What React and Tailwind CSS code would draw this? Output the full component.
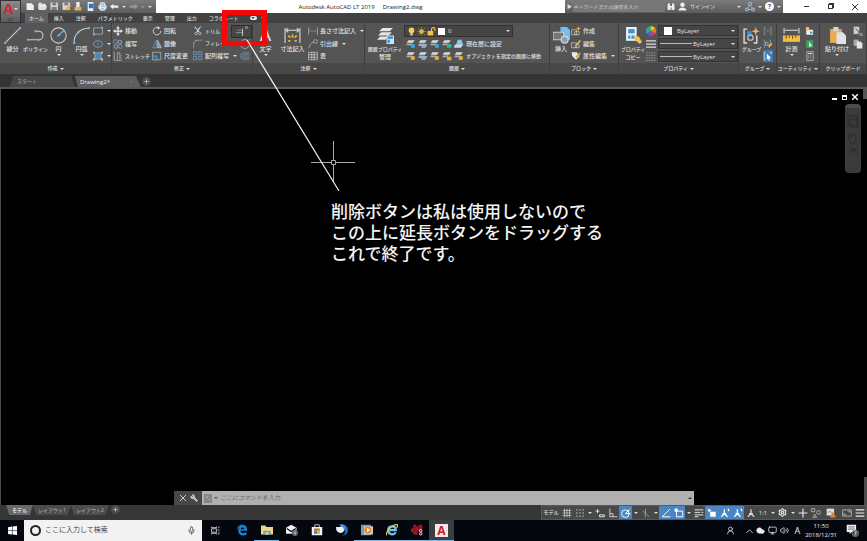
import { UserRound, Wrench, Settings, Cloud, Mic, Printer, FolderOpen, Monitor, Volume2 } from "lucide-react";

const jp = "font-['Open_Sans','Noto_Sans_CJK_JP',sans-serif]";

// Shared 16x16 drawings. Keys are used by the ribbon, quick access bar and status bar.
const shapes = {
    line: <><path d="M1 15 15 1" stroke="#ccc" /><path d="M0 14h2v2H0zM14 0h2v2h-2z" fill="#6cb4e8" stroke="none" /></>,
    pline: <><path d="M1 12h10a4 4 0 0 0 0-8H8" stroke="#ccc" /><path d="M0 11h2v2H0zM7 3h2v2H7zM10 11h2v2h-2z" fill="#6cb4e8" stroke="none" /></>,
    circle: <><circle cx="8" cy="8" r="7.2" stroke="#ccc" /><path d="m8 8 4-4" stroke="#6cb4e8" /><path d="M7 7h2v2H7zM12 3h2v2h-2z" fill="#6cb4e8" stroke="none" /></>,
    arc: <><path d="M1 15C1 7 6 2 15 1" stroke="#ccc" /><path d="M0 14h2v2H0zM4 4h2v2H4zM14 0h2v2h-2z" fill="#6cb4e8" stroke="none" /></>,
    rect: <><path d="M1 3h14v10H1z" stroke="#ccc" /><path d="M0 12h3v3H0zM13 1h3v3h-3z" fill="#6cb4e8" stroke="none" /></>,
    ellipse: <><ellipse cx="8" cy="8" rx="7" ry="5" stroke="#9ac4e4" /><path d="M7 7h2v2H7z" fill="#6cb4e8" stroke="none" /></>,
    hatch: <><path d="M3 3h10v10H3z" fill="#4f86b0" stroke="#9ac4e4" /><path d="M0 1h3v3H0zM13 1h3v3h-3zM0 12h3v3H0zM13 12h3v3h-3z" fill="#ccc" stroke="none" /></>,
    move: <path d="M8 0 5 4h2v3H4V5L0 8l4 3V9h3v3H5l3 4 3-4H9V9h3v2l4-3-4-3v2H9V4h2z" fill="#eee" stroke="none" />,
    copy: <><circle cx="4" cy="4" r="3" stroke="#6cb4e8" /><circle cx="11" cy="5" r="3" stroke="#ccc" /><circle cx="5" cy="12" r="3" stroke="#ccc" /><circle cx="12" cy="12" r="3" stroke="#6cb4e8" /></>,
    stretch: <><path d="M2 1v14M2 15h12M7 14V3h4v11" stroke="#ccc" /><path d="M13 6v9" stroke="#6cb4e8" strokeDasharray="2 1" /></>,
    rotate: <><path d="M11 3a6 6 0 1 0 3 5" stroke="#ddd" strokeWidth="1.4" /><path d="m9 0 4 3-4 3z" fill="#ddd" stroke="none" /></>,
    mirror: <><path d="M7 2v12H1z" stroke="#6cb4e8" /><path d="M9 2v12h6z" stroke="#ccc" fill="#999" /></>,
    scale: <><path d="M1 2h13v12H1z" stroke="#ccc" /><path d="M1 8h7v6H1z" stroke="#6cb4e8" fill="#3d6d92" /></>,
    trim: <><path d="m3 1 7 9M12 1 6 10" stroke="#eee" strokeWidth="1.6" /><circle cx="5" cy="12" r="2" stroke="#ddd" /><circle cx="11" cy="12" r="2" stroke="#ddd" /><path d="M1 3h4" stroke="#6cb4e8" /></>,
    fillet: <><path d="M1 15V9c0-5 3-7 7-7h7" stroke="#aaa" /><path d="M1 9c0-5 3-7 7-7" stroke="#6cb4e8" /></>,
    array: <><path d="M1 1h5v5H1zM9 1h5v5H9z" stroke="#6cb4e8" /><path d="M1 9h5v5H1zM9 9h5v5H9z" stroke="#6cb4e8" /></>,
    offset: <path d="M15 3H6a5 5 0 0 0 0 10h9M15 6H7a2 2 0 0 0 0 4h8" stroke="#7fb6dd" />,
    extend: <><path d="M1 9h10M4 5h6" stroke="#bbb" /><path d="M12 3v11" stroke="#ddd" strokeWidth="1.4" /></>,
    dim: <><path d="M1 1v14M15 1v14M2 3h12" stroke="#ddd" /><path d="m4 1-2 2 2 2M12 1l2 2-2 2" stroke="#ddd" /><path d="m8 7 0 3M4 8l2 2M12 8l-2 2M4 13h2M10 13h2" stroke="#f0b840" strokeWidth="1.6" /></>,
    linear: <><path d="M1 2v12M15 2v12" stroke="#ccc" /><path d="M2 8h12" stroke="#6cb4e8" /></>,
    leader: <><path d="M1 15C3 9 5 6 9 5" stroke="#ccc" /><circle cx="12" cy="4" r="3" stroke="#ccc" /></>,
    table: <><path d="M1 2h14v12H1z" stroke="#ddd" /><path d="M1 6h14M1 10h14M6 2v12M10 2v12" stroke="#ddd" /></>,
    layers: <><path d="M5 1h10l-3 3H2zM4 5h10l-3 3H1zM3 9h8l-3 3H0z" fill="#e4e4e4" stroke="none" /><path d="M9 8h7v8H9z" fill="#cfe6f7" stroke="none" /><path d="M10 9h5v2h-5zM10 12h2v3h-2z" fill="#3b87c4" stroke="none" /></>,
    layA: <><path d="M4 2h10l-3 4H1z" fill="#ddd" stroke="none" /><path d="M2 7h8l-2 3H0z" fill="#aaa" stroke="none" /><circle cx="11" cy="11" r="3.5" fill="#39a9dc" stroke="none" /></>,
    layB: <><path d="M4 2h10l-3 4H1z" fill="#ddd" stroke="none" /><path d="M2 7h8l-2 3H0z" fill="#aaa" stroke="none" /><circle cx="11" cy="11" r="3.5" fill="#e9ac34" stroke="none" /></>,
    layC: <><path d="M4 2h10l-3 4H1z" fill="#ddd" stroke="none" /><path d="M2 7h8l-2 3H0z" fill="#aaa" stroke="none" /><path d="M8 8h7v6H8z" fill="#2fb5a4" stroke="none" /></>,
    layD: <><path d="M4 2h10l-3 4H1z" fill="#ddd" stroke="none" /><path d="M2 7h8l-2 3H0z" fill="#aaa" stroke="none" /><path d="M8 9h7v6H8z" fill="#e9ac34" stroke="none" /><path d="M9 9V6h4" stroke="#e9ac34" /></>,
    layE: <><path d="M4 2h10l-3 4H1z" fill="#ddd" stroke="none" /><path d="M2 7h9l-3 4H0z" fill="#aaa" stroke="none" /><path d="M7 8h8l-3 6H5z" fill="#8cb4d2" stroke="none" /></>,
    layF: <><path d="M6 1h6l3 9H3z" fill="#8cc4ea" stroke="none" /><path d="M1 9h13l-3 5H0z" fill="#cfd9e0" stroke="none" /></>,
    bulb: <><circle cx="8" cy="6" r="5" fill="#f6cf5d" stroke="none" /><path d="M6 11h4v4H6z" fill="#ddd" stroke="none" /></>,
    sun: <><circle cx="8" cy="8" r="4" fill="#f3c244" stroke="none" /><path d="M8 0v16M0 8h16M2 2l12 12M14 2 2 14" stroke="#e0ac36" strokeWidth=".8" /></>,
    unlock: <><path d="M1 7h10v8H1z" fill="#f3c244" stroke="none" /><path d="M8 7V4a3 3 0 0 1 6 0v3" stroke="#f3c244" strokeWidth="2" /></>,
    insert: <><path d="M7 0h6l3 3v9H7z" fill="#78bdf0" stroke="none" /><path d="M0 5h10v7H0z" fill="#777" stroke="#ccc" /><circle cx="11" cy="12" r="3.3" fill="#8a9fb0" stroke="#ddd" /></>,
    create: <><path d="M1 6h8v8H1z" stroke="#ddd" /><path d="M6 9h7v5H6z" stroke="#ddd" /><path d="m12 0 1 3 3 1-3 1-1 3-1-3-3-1 3-1z" fill="#f3b83c" stroke="none" /></>,
    edit: <><path d="M1 6h8v8H1zM7 9h6v5H7z" stroke="#ddd" /><path d="m8 9 6-8 2 2-6 7z" fill="#f3b83c" stroke="none" /></>,
    attr: <><path d="M1 2h8l5 6-6 6-6-6z" fill="#eee" stroke="none" /><path d="m7 9 7-7 2 2-7 7z" fill="#d99a30" stroke="none" /></>,
    match: <><path d="M1 0h10v13H1z" fill="#e8f1f8" stroke="none" /><path d="M3 2h6v4H3z" fill="#3d91d4" stroke="none" /><path d="M3 8h2v3H3zM6 8h3v3H6z" fill="#3d91d4" stroke="none" /><path d="m8 8 5 1 3 5-2 2-5-4z" fill="#eabf62" stroke="none" /></>,
    wheel: <><path d="M8 8V0a8 8 0 0 1 7 4z" fill="#f2c431" stroke="none" /><path d="m8 8 7-4a8 8 0 0 1 0 8z" fill="#ee7a2b" stroke="none" /><path d="m8 8 7 4a8 8 0 0 1-7 4z" fill="#d9377d" stroke="none" /><path d="M8 8v8a8 8 0 0 1-7-4z" fill="#6a54c9" stroke="none" /><path d="m8 8-7 4a8 8 0 0 1 0-8z" fill="#2aa2e0" stroke="none" /><path d="M8 8 1 4a8 8 0 0 1 7-4z" fill="#46b34b" stroke="none" /></>,
    weights: <path d="M0 3h16M0 8h16M0 13h16" stroke="#ddd" strokeWidth="2" />,
    types: <path d="M0 3h16M0 7h16M0 11h16M0 15h16" stroke="#aaa" strokeDasharray="3 1" />,
    group: <><path d="M4 2H1v13h3M10 15h3V8" stroke="#ddd" strokeWidth="1.3" /><path d="M4 4h4v4H4z" fill="#3d91d4" stroke="none" /><circle cx="7" cy="10" r="2.5" stroke="#ccc" /><path d="m12 0 1 3 3 1-3 1-1 3-1-3-3-1 3-1z" fill="#f3b83c" stroke="none" /></>,
    ungroup: <><path d="M4 2H2v12h2M11 2h2v12h-2" stroke="#6cb4e8" /><path d="m4 5 8 6M12 5l-8 6" stroke="#e05a4a" /></>,
    gedit: <><path d="M4 2H2v12h2M10 2h2v5" stroke="#6cb4e8" /><path d="M4 5h4v5H4z" stroke="#ccc" /><path d="m8 11 5-5 2 2-5 6z" fill="#f3b83c" stroke="none" /></>,
    gsel: <><path d="M4 2H2v12h2M11 2h2v3" stroke="#fff" /><path d="m6 4 7 7-3 .5L11 15l-2 0-1-3-2 2z" fill="#fff" stroke="none" /></>,
    measure: <><path d="M1 1v5M15 1v5M2 3h12" stroke="#ddd" /><path d="M0 8h16v6H0z" fill="#f1be49" stroke="none" /><path d="M3 8v3M6 8v2M9 8v3M12 8v2" stroke="#7a5a16" /></>,
    quick: <><path d="M2 6h11v8H2z" fill="#eee" stroke="none" /><circle cx="4" cy="4" r="3" fill="#f1be49" stroke="none" /><path d="M8 9h4v3H8z" fill="#3d91d4" stroke="none" /></>,
    select: <><path d="M2 2h11v12H2z" fill="#3da264" stroke="none" /><path d="m6 4 6 7-3 0-2 3z" fill="#d7f5e1" stroke="none" /></>,
    calc: <><path d="M3 1h10v14H3z" stroke="#ddd" /><path d="M5 3h6v2H5z" fill="#ddd" stroke="none" /><path d="M5 8h6M5 11h6" stroke="#ddd" strokeDasharray="2 1" /></>,
    paste: <><path d="M1 2h11v13H1z" fill="#e8ad52" stroke="none" /><path d="M4 0h5v4H4z" fill="#d4d4d4" stroke="none" /><path d="M7 5h6l3 3v8H7z" fill="#dfe3e6" stroke="none" /></>,
    cut: <><path d="M1 1h9v12H1z" fill="#ccc" stroke="none" /><path d="m4 4 9 9M13 7l-7 7" stroke="#555" strokeWidth="1.5" /><circle cx="13" cy="14" r="2" stroke="#ddd" /></>,
    pages: <><path d="M1 1h8v10H1z" fill="#aaa" stroke="none" /><path d="M6 4h6l3 3v8H6z" fill="#e4e4e4" stroke="none" /></>,
    page: <path d="M1 2h9l4 4v8H1z" fill="#eee" stroke="none" />,
    save: <><path d="M1 1h13v13H1z" fill="#d8d8d8" stroke="none" /><path d="M4 1h7v5H4zM3 9h9v5H3z" fill="#7d7d7d" stroke="none" /></>,
    saveAs: <><path d="M1 1h13v13H1z" fill="#d8d8d8" stroke="none" /><path d="M4 1h7v5H4z" fill="#7d7d7d" stroke="none" /><path d="m6 12 8-7 2 2-7 8z" fill="#e9ac34" stroke="none" /></>,
    cloudOpen: <><path d="M4 0h6v9H4z" fill="#eee" stroke="none" /><path d="M1 9h12v6H1z" fill="#e0b45a" stroke="none" /></>,
    mobile: <><path d="M3 0h10v16H3z" fill="#e6eef5" stroke="none" /><path d="M5 3h8v8H5z" fill="#2e79bd" stroke="none" /></>,
    undo: <path d="M0 8 6 3v3h9v4H6v3z" fill="#eee" stroke="none" />,
    redo: <path d="m16 8-6-5v3H1v4h9v3z" fill="#999" stroke="none" />,
    grid: <path d="M4 1v14M8 1v14M12 1v14M1 4h14M1 8h14M1 12h14" stroke="#ddd" />,
    dots: <path d="M2 3h13M2 8h13M2 13h13" stroke="#ddd" strokeWidth="1.6" strokeDasharray="2 3" />,
    infer: <path d="M1 5h6M4 2v6M7 11h8v3H7z" stroke="#ddd" strokeWidth="1.6" />,
    ortho: <path d="M3 1v13h12M3 9h5v5" stroke="#ddd" strokeWidth="1.4" />,
    polar: <><circle cx="7" cy="9" r="6" stroke="#fff" strokeWidth="1.5" /><path d="M7 9h8M7 9l7-7" stroke="#fff" strokeWidth="1.5" /></>,
    iso: <path d="M7 1v14M7 8l6 6M7 8 3 5" stroke="#8fae84" strokeWidth="1.4" />,
    angle: <path d="M14 2 2 14h13" stroke="#fff" strokeWidth="1.5" />,
    osnap: <><path d="M4 5h10v9H4z" stroke="#fff" strokeWidth="1.5" /><path d="M1 1h5v5H1z" fill="#fff" stroke="none" /></>,
    lwt: <path d="M1 3h14M1 7h9M12 7h3M1 11h14M1 14h6" stroke="#ddd" strokeWidth="1.6" />,
    cycle: <><path d="M5 6h9v8H5z" fill="#fff" stroke="none" /><path d="m1 1 6 2-4 4z" fill="#fff" stroke="none" /></>,
    anno: <><path d="M7 2v7l-5 5M7 9l5 5M4 9h6" stroke="#fff" strokeWidth="2" /><path d="m13 1 1 4" stroke="#fff" strokeWidth="2" /></>,
    annoPlain: <path d="M8 2v7l-5 5M8 9l5 5M5 9h6" stroke="#ddd" strokeWidth="2" />,
    plus: <path d="M8 1v14M1 8h14" stroke="#eee" strokeWidth="1.8" />,
    isolate: <><path d="M1 1h5v5H1z" stroke="#ddd" /><circle cx="12" cy="7" r="3" stroke="#ddd" /><path d="m6 10 3 5H3z" stroke="#ddd" /></>,
    warn: <><path d="M1 1h12v11H1z" fill="#ddd" stroke="none" /><path d="m3 8 3-3 3 3" stroke="#555" /><path d="m11 6 5 9H6z" fill="#ed7c2d" stroke="none" /></>,
    clean: <><path d="M1 3h14v10H1z" stroke="#ddd" /><path d="M9 5h4v3M7 11H3V8" stroke="#ddd" /></>,
    menu: <path d="M1 3h14M1 8h14M1 13h14" stroke="#eee" strokeWidth="1.8" />,
};

function Icon({ name, className = "size-[10px]" }) {
    return (
        <svg viewBox="0 0 16 16" fill="none" className={`${className} shrink-0`} aria-hidden="true">
            {shapes[name]}
        </svg>
    );
}

function Caret({ className = "text-[#e0e0e0]" }) {
    return (
        <svg viewBox="0 0 4 2" className={`h-[2px] w-1 shrink-0 ${className}`} aria-hidden="true">
            <path d="M0 0h4L2 2z" fill="currentColor" />
        </svg>
    );
}

function Panel({ title, width, arrow = true, children }) {
    return (
        <section className={`flex flex-col border-r border-[#3f3f3f] ${width}`}>
            <div className="flex h-10 px-px pt-[2px] pb-px">{children}</div>
            <div className="flex h-[11px] items-center justify-center gap-[2px] bg-[#484848] text-[5px] whitespace-nowrap">
                {title}
                {arrow && <Caret />}
            </div>
        </section>
    );
}

function BigButton({ icon, label, label2, caret, width = "w-[23px]", children }) {
    return (
        <button className={`flex shrink-0 flex-col items-center whitespace-nowrap ${width}`}>
            <span className="flex h-5 items-center justify-center">
                {children || <Icon name={icon} className="size-[17px]" />}
            </span>
            <span className="h-2 leading-[8px]">{label}</span>
            {label2 && <span className="h-2 leading-[8px]">{label2}</span>}
            {caret && <Caret className="mt-px text-[#e0e0e0]" />}
        </button>
    );
}

function SmallButton({ icon, label, size = "text-[6px]", caret, active }) {
    return (
        <button
            aria-label={label || icon}
            className={`flex h-3 items-center gap-[2px] whitespace-nowrap ${size} ${active ? "bg-[#3e7cb5]" : ""}`}
        >
            <Icon name={icon} />
            {label}
            {caret && <Caret className="ml-[2px] text-[#e0e0e0]" />}
        </button>
    );
}

function Column({ width = "", children }) {
    return <div className={`flex shrink-0 flex-col items-start justify-between ${width}`}>{children}</div>;
}

function ByLayer({ label, children, pad = "pl-[18px]" }) {
    return (
        <label className="relative flex h-[11px] w-20 items-center border border-[#333] bg-[#454545]">
            {children}
            <select aria-label={label} className={`h-full w-full appearance-none text-[6px] leading-none ${pad}`}>
                <option>ByLayer</option>
            </select>
            <Caret className="absolute right-[2px] text-[#e0e0e0]" />
        </label>
    );
}

const quickAccess = ["page", "open", "save", "saveAs", "cloudOpen", "mobile", "print"];

function TitleBar() {
    return (
        <header className="flex h-[13px] bg-white">
            <div className="flex w-[135px] shrink-0 items-center gap-[3px] bg-gradient-to-b from-[#7b7b7b] to-[#5c5c5c] pl-[5px]">
                {quickAccess.map((name) => (
                    <button key={name} aria-label={name} className="w-[9px] shrink-0 text-white">
                        {name === "open" && <FolderOpen size={9} fill="#ddd" />}
                        {name === "print" && <Printer size={9} fill="#9cc8ea" />}
                        {shapes[name] && <Icon name={name} className="size-[9px]" />}
                    </button>
                ))}
                <button aria-label="undo"><Icon name="undo" className="size-[9px]" /></button>
                <Caret />
                <button aria-label="redo"><Icon name="redo" className="size-[9px]" /></button>
                <Caret className="text-[#999]" />
                <Caret />
            </div>
            <h1 className="flex flex-1 items-center justify-center gap-2 text-[6px] leading-none text-[#222]">
                <span>Autodesk AutoCAD LT 2019</span>
                <span>Drawing2.dwg</span>
            </h1>
            <div className="flex w-[218px] shrink-0 items-center bg-gradient-to-b from-[#7b7b7b] to-[#5c5c5c] text-[5px] text-[#e4e4e4]">
                <span className="w-2 pl-[2px] text-[5px]">▶</span>
                <input
                    aria-label="キーワードまたは語句を入力"
                    placeholder="キーワードまたは語句を入力"
                    className="h-[11px] w-[92px] bg-[#777] text-[5px] italic placeholder:text-[#ccc]"
                />
                <button aria-label="search" className="ml-[2px] w-[11px]">
                    <svg viewBox="0 0 16 16" className="size-[8px]"><path d="M2 1h4v4l1 3v6H1V6zM10 1h4l1 5v8H9V8l1-3zM6 6h4v3H6z" fill="#eee" /></svg>
                </button>
                <button className="flex flex-1 items-center gap-[3px]">
                    <svg viewBox="0 0 16 16" className="size-[9px]"><circle cx="8" cy="5" r="4" fill="#eee" /><path d="M1 15c0-7 14-7 14 0z" fill="#eee" /></svg>
                    サインイン
                </button>
                <Caret />
                <button aria-label="A360" className="ml-1">
                    <svg viewBox="0 0 16 16" className="size-[10px]" fill="none"><path d="M8 4 3 12h10z" stroke="#ccd8e8" /><path d="M6 1h4v4H6zM1 10h4v4H1zM11 10h4v4h-4z" fill="#3b6bb0" stroke="#dde" /></svg>
                </button>
                <Caret className="ml-[3px]" />
                <button aria-label="ヘルプ" className="mx-[3px] size-[9px] shrink-0 rounded-full bg-white text-[7px] leading-[9px] font-bold text-[#2f5f9b]">?</button>
                <Caret className="mr-[2px]" />
            </div>
            <div className="flex w-[84px] shrink-0 items-center justify-around pl-3 text-[#333]">
                <button aria-label="最小化" className="h-px w-[5px] bg-[#333]" />
                <button aria-label="元に戻す" className="relative size-[5px] border border-[#333]">
                    <span className="absolute -top-[2px] left-0 size-[5px] border-t border-r border-[#333]" />
                </button>
                <button aria-label="閉じる">
                    <svg viewBox="0 0 6 6" className="size-[6px]"><path d="m0 0 6 6M6 0 0 6" stroke="#222" strokeWidth=".9" /></svg>
                </button>
            </div>
        </header>
    );
}

const ribbonTabs = ["挿入", "注釈", "パラメトリック", "表示", "管理", "出力", "コラボレート"];

function RibbonTabs() {
    return (
        <nav className="flex h-[10px] items-center gap-[10px] bg-[#424242] pl-1 text-[5px] leading-none font-medium">
            <a href="#home" className="-mr-1 flex h-full items-center bg-[#606060] px-1">ホーム</a>
            {ribbonTabs.map((tab) => (
                <a key={tab} href={`#${tab}`} className="min-w-3">{tab}</a>
            ))}
            <span className="flex items-center gap-1 pl-px">
                <span className="flex h-1 w-[7px] items-center justify-center rounded-sm bg-[#eee]"><Caret className="text-[#444]" /></span>
                <Caret />
            </span>
        </nav>
    );
}

const layerRows = [
    { icons: ["layA", "layE", "layA", "layC"], last: "layF", label: "現在層に設定", size: "text-[6px]" },
    { icons: ["layB", "layE", "layB", "layD"], last: "layB", label: "オブジェクトを指定の画層に移動", size: "text-[5px]" },
];

function Ribbon() {
    return (
        <div className="flex bg-[#545454] text-[6px] leading-none font-medium text-[#e2e2e2]">
            <Panel title="作成" width="w-[112px]">
                <BigButton icon="line" label="線分" />
                <BigButton icon="pline" label={<span className="text-[5px]">ポリライン</span>} />
                <BigButton icon="circle" label="円" caret />
                <BigButton icon="arc" label="円弧" caret />
                <Column>
                    <SmallButton icon="rect" caret />
                    <SmallButton icon="ellipse" caret />
                    <SmallButton icon="hatch" caret />
                </Column>
            </Panel>
            <Panel title="修正" width="w-[141px]">
                <Column width="w-[39px]">
                    <SmallButton icon="move" label="移動" />
                    <SmallButton icon="copy" label="複写" />
                    <SmallButton icon="stretch" label="ストレッチ" size="text-[5px]" />
                </Column>
                <Column width="w-[41px]">
                    <SmallButton icon="rotate" label="回転" />
                    <SmallButton icon="mirror" label="鏡像" />
                    <SmallButton icon="scale" label="尺度変更" />
                </Column>
                <Column width="w-[47px]">
                    <SmallButton icon="trim" label="トリム" size="text-[5px]" />
                    <SmallButton icon="fillet" label="フィレット" size="text-[5px]" />
                    <SmallButton icon="array" label="配列複写" caret />
                </Column>
                <Column>
                    <SmallButton icon="extend" />
                    <SmallButton icon="circle" />
                    <SmallButton icon="offset" />
                </Column>
            </Panel>
            <Panel title="注釈" width="w-[112px]">
                <BigButton label="文字" caret>
                    <span className="font-['Liberation_Sans',sans-serif] text-[17px] leading-[17px] text-[#eee]">A</span>
                </BigButton>
                <BigButton icon="dim" label="寸法記入" width="w-[31px]" />
                <Column>
                    <SmallButton icon="linear" label="長さ寸法記入" caret />
                    <SmallButton icon="leader" label="引出線" caret />
                    <SmallButton icon="table" label="表" />
                </Column>
            </Panel>
            <Panel title="画層" width="w-[185px]">
                <BigButton icon="layers" width="w-[38px]" label={<span className="text-[5px]">画層プロパティ</span>} label2="管理" />
                <Column>
                    <label className="relative flex h-3 w-[109px] items-center gap-px border border-[#333] bg-[#454545] px-[2px]">
                        <Icon name="bulb" className="size-[9px]" />
                        <Icon name="sun" className="size-[9px]" />
                        <Icon name="unlock" className="size-[9px]" />
                        <span className="ml-px size-[7px] shrink-0 bg-white" />
                        <select aria-label="画層" className="w-full appearance-none pl-[2px] text-[6px] leading-none">
                            <option>0</option>
                        </select>
                        <Caret className="absolute right-[2px] text-[#e0e0e0]" />
                    </label>
                    {layerRows.map((row) => (
                        <div key={row.label} className="flex h-3 items-center gap-[2px] pl-[2px]">
                            {row.icons.map((name, idx) => (
                                <button key={idx} aria-label={`画層 ${idx + 1}`}><Icon name={name} /></button>
                            ))}
                            <SmallButton icon={row.last} label={row.label} size={row.size} />
                        </div>
                    ))}
                </Column>
            </Panel>
            <Panel title="ブロック" width="w-[69px]">
                <BigButton icon="insert" label="挿入" width="w-5" />
                <Column>
                    <SmallButton icon="create" label="作成" />
                    <SmallButton icon="edit" label="編集" />
                    <SmallButton icon="attr" label="属性編集" caret />
                </Column>
            </Panel>
            <Panel title="プロパティ" width="w-[120px]">
                <BigButton icon="match" width="w-[26px]" label={<span className="text-[5px]">プロパティ</span>} label2={<span className="text-[5px]">コピー</span>} />
                <Column width="w-3">
                    <SmallButton icon="wheel" />
                    <SmallButton icon="weights" />
                    <SmallButton icon="types" />
                </Column>
                <Column>
                    <ByLayer label="色"><span className="absolute left-[5px] size-2 bg-white" /></ByLayer>
                    <ByLayer label="線の太さ" pad="pl-[34px]"><span className="absolute left-px h-px w-8 bg-[#bbb]" /></ByLayer>
                    <ByLayer label="線種" pad="pl-[34px]"><span className="absolute left-px h-px w-8 bg-[#bbb]" /></ByLayer>
                </Column>
            </Panel>
            <Panel title="グループ" width="w-[38px]">
                <BigButton icon="group" label={<span className="text-[5px]">グループ</span>} />
                <Column>
                    <SmallButton icon="ungroup" />
                    <SmallButton icon="gedit" />
                    <SmallButton icon="gsel" active />
                </Column>
            </Panel>
            <Panel title="ユーティリティ" width="w-[43px]">
                <BigButton icon="measure" label="計測" width="w-[27px]" caret />
                <Column>
                    <SmallButton icon="quick" />
                    <SmallButton icon="select" />
                    <SmallButton icon="calc" />
                </Column>
            </Panel>
            <Panel title="クリップボード" width="min-w-0 flex-1" arrow={false}>
                <BigButton icon="paste" label="貼り付け" width="w-8" caret />
                <div className="flex flex-col gap-px">
                    <SmallButton icon="cut" />
                    <SmallButton icon="pages" />
                </div>
            </Panel>
        </div>
    );
}

function FileTabs() {
    return (
        <div className="flex h-[15px] items-end border-b-2 border-[#5a5a5a] bg-[#343434] pl-[10px] text-[6px] leading-none text-[#a8a8a8]">
            <button className="flex h-[11px] w-[65px] items-center bg-[#484848] pl-[7px] text-[5px] [clip-path:polygon(5%_0,94%_0,100%_100%,0_100%)]">スタート</button>
            <button className="flex h-[11px] w-[66px] items-center justify-between bg-[#5e5e5e] pr-2 pl-[5px] text-[#f0f0f0] [clip-path:polygon(0_0,92%_0,100%_100%,4%_100%)]">
                Drawing2*<span className="text-[6px] text-[#888]">×</span>
            </button>
            <button aria-label="新規図面" className="mb-px ml-px flex size-[9px] items-center justify-center rounded-full bg-[#4d4d4d]">
                <Icon name="plus" className="size-[5px]" />
            </button>
        </div>
    );
}

function DrawingArea() {
    return (
        <main className="relative flex min-h-0 flex-1 flex-col border-l border-[#4a4a4a] bg-black">
            <div className="flex items-start justify-end">
                <div className="mt-[5px] mr-[5px] flex items-center gap-[5px]">
                    <button aria-label="最小化" className="mt-1 h-[2px] w-[5px] bg-white" />
                    <button aria-label="元に戻す" className="size-[5px] border border-t-2 border-white" />
                    <button aria-label="閉じる">
                        <svg viewBox="0 0 6 6" className="size-[6px]"><path d="m0 0 6 6M6 0 0 6" stroke="#fff" strokeWidth="1.4" /></svg>
                    </button>
                </div>
                <div className="h-[10px] w-1 bg-[#555]" />
            </div>
            {/* ナビゲーションバー */}
            <div className="mt-1 mr-[6px] flex h-[69px] w-4 flex-col items-center self-end rounded-sm border-t-4 border-[#4c4c4c] bg-[#3b3b3b] pt-[5px]">
                <svg viewBox="0 0 16 50" className="h-[52px] w-4" fill="none" stroke="#2b2b2b">
                    <path d="M3 2h9v9H3zM5 5h8v8H5z" />
                    <path d="M4 26v-5l2-2 1 4 2-4 2 2v6l-2 3H6zM4 32l9 8M13 32l-9 8M4 36h9" />
                    <path d="M8 46v2" />
                </svg>
            </div>
            <p className="absolute top-[112px] left-[330px] text-[17px] leading-[21px] font-medium whitespace-nowrap text-[#f4f4f4]">
                削除ボタンは私は使用しないので
                <br />
                この上に延長ボタンをドラッグする
                <br />
                これで終了です。
            </p>
            <svg viewBox="0 0 44 44" className="absolute top-[51px] left-[310px] size-11" fill="none" stroke="#aaa">
                <path d="M0 22.5h20M24 22.5h20M22.5 1v19M22.5 24v18" />
                <path d="M20.5 20.5h4v4h-4z" />
            </svg>
            <div className="mx-[173px] mt-auto flex h-[14px] items-stretch text-[6px]">
                <div className="flex w-7 items-center justify-end gap-1 bg-[#484848] pr-1">
                    <svg viewBox="0 0 6 6" className="size-[6px]"><path d="m0 0 6 6M6 0 0 6" stroke="#ccc" /></svg>
                    <Wrench size={8} color="#ccc" fill="#ccc" className="-scale-x-100" />
                </div>
                <label className="flex flex-1 items-center gap-[2px] bg-[#b0b0b0] px-[2px]">
                    <span className="flex h-[9px] w-2 items-center justify-center bg-[#888] text-[5px] text-[#ddd]">&gt;_</span>
                    <Caret className="text-[#555]" />
                    <input
                        aria-label="コマンド"
                        placeholder="ここにコマンドを入力"
                        className="min-w-0 flex-1 text-[6px] italic placeholder:text-[#666]"
                    />
                    <Caret className="rotate-180 text-[#333]" />
                </label>
            </div>
            <div className="absolute right-0 bottom-0 h-7 w-[3px] bg-[#4c4c4c]" />
        </main>
    );
}

const statusItems = [
    { icon: "grid" }, { icon: "dots", caret: true },
    { icon: "infer" }, { icon: "ortho" }, { icon: "polar", on: true, caret: true },
    { icon: "iso", caret: true }, { icon: "angle", on: true }, { icon: "osnap", on: true, caret: true },
    { icon: "lwt" }, { icon: "cycle", on: true }, { icon: "anno", on: true }, { icon: "anno", on: true },
    { icon: "annoPlain" },
];

function StatusCell({ icon, on, caret }) {
    return (
        <>
            <button aria-label={icon} className={`flex h-[13px] w-[13px] items-center justify-center ${on ? "bg-[#4b86c2]" : ""}`}>
                <Icon name={icon} className="size-[10px]" />
            </button>
            {caret && <span className="flex w-[7px] justify-center"><Caret /></span>}
        </>
    );
}

function StatusBar() {
    return (
        <div className="flex h-[15px] justify-between bg-[#363636] text-[5px] leading-none text-[#bbb]">
            <div className="flex items-start pl-[6px]">
                <button className="h-[10px] w-[27px] bg-[#686868] font-medium text-white [clip-path:polygon(0_0,100%_0,88%_100%,12%_100%)]">モデル</button>
                <button className="h-[10px] w-[38px] bg-[#4c4c4c] [clip-path:polygon(0_0,100%_0,90%_100%,8%_100%)]">レイアウト1</button>
                <button className="h-[10px] w-[38px] bg-[#4c4c4c] [clip-path:polygon(0_0,100%_0,90%_100%,8%_100%)]">レイアウト2</button>
                <button aria-label="新規レイアウト" className="ml-[2px] flex size-[9px] items-center justify-center rounded-full bg-[#4c4c4c]">
                    <Icon name="plus" className="size-[5px]" />
                </button>
            </div>
            <div className="flex items-center border border-[#5a5a5a] bg-[#484848] text-[#e4e4e4]">
                <button className="w-[18px] text-[5px] font-medium">モデル</button>
                {statusItems.map((item, idx) => <StatusCell key={idx} {...item} />)}
                <button className="w-3 text-[6px]">1:1</button>
                <span className="flex w-[7px] justify-center"><Caret /></span>
                <button aria-label="ワークスペース" className="flex w-[13px] justify-center"><Settings size={9} strokeWidth={3} /></button>
                <span className="flex w-[7px] justify-center"><Caret /></span>
                <StatusCell icon="plus" />
                <StatusCell icon="isolate" />
                <span className="w-[2px]" />
                <StatusCell icon="warn" />
                <span className="w-[3px]" />
                <StatusCell icon="clean" />
                <StatusCell icon="menu" />
            </div>
        </div>
    );
}

const apps = [
    { name: "Edge", art: <><path d="M1 8C2 3 5 1 8 1c5 0 7 3 7 8H6c0 3 4 4 8 2v3c-5 3-11 1-11-5 0-2 1-4 3-5-2 1-4 2-5 4z" fill="#1683d8" /><path d="M6 7h5c0-3-4-3-5 0z" fill="#05070d" /></> },
    { name: "エクスプローラー", open: true, art: <><path d="M0 2h6l1 2h9v10H0z" fill="#f5d77b" /><path d="M3 9h10v5H3z" fill="#59a6d8" /><path d="M6 11h4v3H6z" fill="#f5d77b" /></> },
    { name: "メール", art: <><path d="m0 5 7-4 7 4v8H0z" fill="#f2f2f2" /><path d="m1 6 6 4 6-4" stroke="#05070d" strokeWidth="1.5" fill="none" /><circle cx="12" cy="12" r="4" fill="#666" /><path d="M12 10v4" stroke="#fff" /></> },
    { name: "ストア", art: <><path d="M5 4V1h6v3" stroke="#eee" fill="none" /><path d="M1 4h14v11H1z" fill="#f2f2f2" /><path d="M4 6h4v3H4z" fill="#e8542c" /><path d="M8 6h4v3H8z" fill="#6cab22" /><path d="M4 9h4v4H4z" fill="#258fd6" /><path d="M8 9h4v4H8z" fill="#f3b418" /></> },
    { name: "Thunderbird", art: <><path d="M5 1c6-2 11 2 11 7s-4 8-9 7c3 0 5-2 5-5z" fill="#2a66b4" /><path d="M5 1c4-1 8 2 8 6H7z" fill="#4f95dc" /><path d="M0 4h9l2 4c-1 4-5 5-8 3C1 10 0 8 0 4z" fill="#e9eff5" /></> },
    { name: "メディア", open: true, art: <><path d="M0 1h13v14H0z" fill="#6da0c4" /><path d="M4 3h12v11H4z" fill="#d7c9b9" /><circle cx="9" cy="8" r="4.5" fill="#ec8425" /><path d="m8 5 4 3-4 3z" fill="#fff" /></> },
    { name: "Internet Explorer", open: true, art: <><path d="M13 11c-3 5-10 3-10-3s10-7 10 0H5" stroke="#6bc8f2" strokeWidth="3" fill="none" /><path d="M1 15C-1 10 9 0 15 1c1 1 0 3-1 4" stroke="#f3cc44" strokeWidth="1.5" fill="none" /></> },
    { name: "Jw", open: true, art: <><path d="M3 1h4v2h4V1h4v6h-3v2H9v5H3v-3H0V6h3z" fill="#a51622" /><path d="M5 5h2M10 5h2M4 9h3" stroke="#4d070d" /><circle cx="13" cy="9" r="1.800" stroke="#eee" fill="#a51622" /><circle cx="13" cy="13" r="1.800" stroke="#eee" fill="#a51622" /></> },
];

function Taskbar() {
    return (
        <footer className="flex h-[21px] items-stretch bg-[#04070d] text-[#eee]">
            <button aria-label="スタート" className="flex w-6 items-center justify-center">
                <svg viewBox="0 0 16 16" className="size-[9px]"><path d="m0 2 7-1v6H0zM8 1l8-1v7H8zM0 8h7v7l-7-1zM8 8h8v8l-8-1z" fill="#fff" /></svg>
            </button>
            <label className="flex w-[178px] items-center gap-1 bg-[#f2f2f2] px-[6px]">
                <span className="size-[11px] shrink-0 rounded-full border-2 border-[#222]" />
                <input
                    aria-label="ここに入力して検索"
                    placeholder="ここに入力して検索"
                    className="min-w-0 flex-1 text-[7px] placeholder:text-[#444]"
                />
                <Mic size={9} color="#444" />
            </label>
            <button aria-label="タスクビュー" className="flex w-[27px] items-center justify-center">
                <svg viewBox="0 0 16 16" className="size-[9px]" fill="none" stroke="#ddd" strokeWidth="1.5"><path d="M1 1v2h9V1M1 15v-2h9v2M1 5h9v6H1zM14 1v3M14 6v3M14 11v4" /></svg>
            </button>
            {apps.map((app) => (
                <button
                    key={app.name}
                    aria-label={app.name}
                    className={`flex w-[25px] items-center justify-center border-b ${app.open ? "border-[#76b9ed]" : "border-transparent"}`}
                >
                    <svg viewBox="0 0 16 16" className="size-3">{app.art}</svg>
                </button>
            ))}
            <button aria-label="AutoCAD" className="flex w-[25px] items-center justify-center border-b border-[#76b9ed] bg-[#3b3e43]">
                <span className="size-[13px] bg-[#f3e9e8] text-[12px] leading-[13px] font-bold text-[#c2202c]">A</span>
            </button>
            <div className="ml-auto flex items-center gap-[3px]">
                <UserRound size={9} />
                <svg viewBox="0 0 8 5" className="ml-2 h-1 w-[7px]" fill="none"><path d="m0 5 4-4 4 4" stroke="#eee" /></svg>
                <Cloud size={9} fill="#eee" />
                <Monitor size={9} />
                <Volume2 size={9} />
                <span className="px-[2px] text-[9px] leading-none">A</span>
                <time className="text-center text-[6px] leading-[9px]">
                    11:50
                    <br />
                    2018/12/31
                </time>
                <button aria-label="通知" className="mr-2 ml-[6px]">
                    <svg viewBox="0 0 18 18" className="size-[13px]"><path d="M1 1h13v10H8l-3 3v-3H1z" fill="#f2f2f2" /><path d="M3 4h9M3 7h9" stroke="#333" /><circle cx="13" cy="13" r="4.5" fill="#444" stroke="#888" /><path d="M11.5 11h3l-1.500 2c2 0 1.500 3-1.500 2" stroke="#fff" fill="none" /></svg>
                </button>
            </div>
        </footer>
    );
}

export default function App() {
    return (
        <div className={`relative flex h-screen flex-col overflow-hidden bg-black ${jp}`}>
            <div className="flex bg-[#424242] text-[#dedede]">
                <button className="flex w-[21px] shrink-0 flex-col items-center justify-between border border-[#333] bg-gradient-to-b from-[#8a8a8a] to-[#5c5c5c]">
                    <span className="flex items-center font-['Liberation_Sans',sans-serif] text-[15px] leading-[15px] font-bold text-[#d2232f]">
                        A<Caret />
                    </span>
                    <span className="font-['Liberation_Sans',sans-serif] text-[4px] leading-[4px] text-[#222]">LT</span>
                </button>
                <div className="min-w-0 flex-1">
                    <TitleBar />
                    <RibbonTabs />
                </div>
            </div>
            <Ribbon />
            <FileTabs />
            <DrawingArea />
            <StatusBar />
            <Taskbar />

            {/* ドラッグ中のボタンと赤枠の注記 */}
            <div className="absolute top-[25px] left-[231px] flex h-[13px] w-[21px] items-center justify-center border border-[#2e2e2e] bg-[#474747]">
                <Icon name="extend" />
                <span className="size-[3px] self-start bg-[#777]" />
            </div>
            <div className="absolute top-[10px] left-[222px] h-9 w-[45px] border-[5px] border-[#fb0505]" />
            <svg viewBox="0 0 94 152" className="absolute top-10 left-[246px] h-[152px] w-[94px]" fill="none">
                <path d="M1 0 93 151" stroke="#f4f4f4" strokeWidth="1.2" />
            </svg>
        </div>
    );
}
